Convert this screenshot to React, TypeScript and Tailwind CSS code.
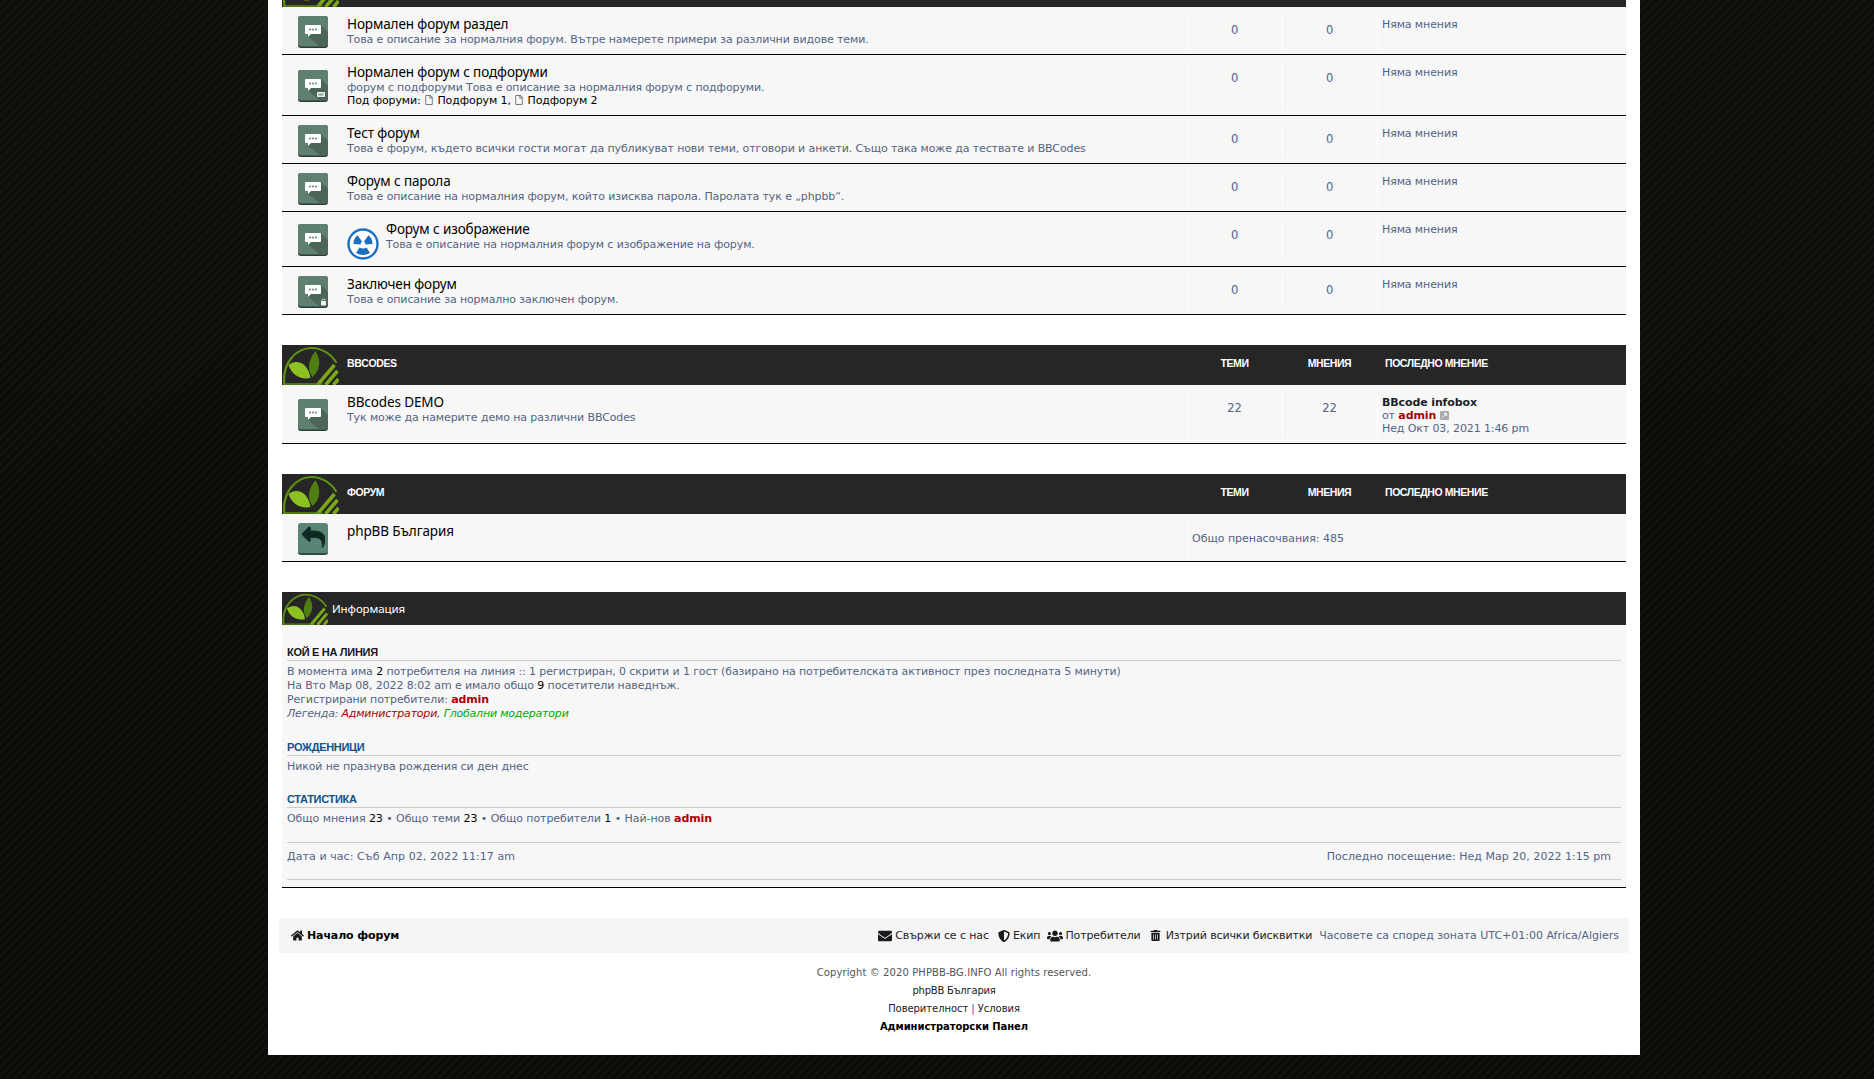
import React from 'react';
import { FaEnvelope, FaHome, FaRegFile, FaShieldAlt, FaTrashAlt, FaUsers } from 'react-icons/fa';

const titleFont = "font-['Noto_Sans',sans-serif]";

const Logo: React.FC<{ small?: boolean }> = ({ small }) => (
  <svg viewBox="0 0 56 40" className={small ? 'w-[46px] h-[33px] shrink-0' : 'w-[57px] h-[40px] shrink-0'}>
    <path d="M2 40 C-1 18 14 3 29 3 C39 3 49 9 54 18" fill="none" stroke="#5f8f12" strokeWidth="2.2" />
    <path d="M6 20 C14 13 26 18 28 33 C17 35 9 29 6 20Z" fill="#8dc021" />
    <path d="M30 32 C23 22 28 12 33 6 C38 14 39 24 30 32Z" fill="#4f7f12" />
    <path d="M35 40 L52 20 M43 40 L55 26 M51 40 L56 34" stroke="#7aa81a" strokeWidth="3.6" fill="none" />
    <path d="M2 39 H40" stroke="#5f8f12" strokeWidth="1.4" />
  </svg>
);

const ForumIcon: React.FC<{ mark?: 'sub' | 'lock' }> = ({ mark }) => (
  <svg viewBox="0 0 30 32" className="w-[30px] h-[32px] shrink-0">
    <rect x="0" y="0" width="30" height="32" rx="3" fill="#2c3b34" />
    <rect x="0" y="0" width="30" height="30.5" rx="3" fill="#5f8070" />
    <path d="M23 9 L30 16 V27.5 Q30 30.5 27 30.5 H22 L9 20 Z" fill="#4b6559" />
    <path d="M8 9 H22 Q23 9 23 10 V17 Q23 18 22 18 H13 L10 21 V18 H8 Q7 18 7 17 V10 Q7 9 8 9Z" fill="#fff" />
    <circle cx="12" cy="13.5" r="1" fill="#5f8070" />
    <circle cx="15" cy="13.5" r="1" fill="#5f8070" />
    <circle cx="18" cy="13.5" r="1" fill="#5f8070" />
    {mark === 'sub' && (
      <g>
        <rect x="19" y="22" width="8" height="5" rx="0.5" fill="#e8eeeb" />
        <rect x="20.5" y="23.5" width="5" height="2" fill="#8aa297" />
      </g>
    )}
    {mark === 'lock' && (
      <g>
        <rect x="23" y="25" width="5" height="4.5" rx="0.5" fill="#f2f2f2" />
        <rect x="24" y="23" width="3" height="3" rx="1.4" fill="none" stroke="#f2f2f2" strokeWidth="0.8" />
      </g>
    )}
  </svg>
);

const ReplyIcon = () => (
  <div className="w-[30px] h-[32px] shrink-0 rounded-[3px] bg-[#5a8474] border-b-2 border-[#2c4a40] flex items-center justify-center">
    <svg viewBox="0 0 1792 1792" className="w-[23px] h-[23px]" fill="#0f2a24" stroke="#0f2a24" strokeWidth="70">
      <path d="M1792 1120q0 166-127 451-3 7-10.5 24t-13.5 30-13 22q-12 17-28 17-15 0-23.5-10t-8.5-25q0-9 2.5-26.5t2.5-23.5q5-68 5-123 0-101-17.5-181t-48.5-138.5-80-101-105.5-69.5-133-42.5-154-21.5-175.5-6h-224v256q0 26-19 45t-45 19-45-19l-512-512q-19-19-19-45t19-45l512-512q19-19 45-19t45 19 19 45v256h224q713 0 875 403 53 134 53 333z" />
    </svg>
  </div>
);

const RadiationIcon = () => (
  <svg viewBox="0 0 32 32" className="w-[32px] h-[32px] shrink-0 float-left mt-[10px] mr-[7px]">
    <circle cx="16" cy="16" r="14.5" fill="#fff" stroke="#1c6fc0" strokeWidth="2.4" />
    <path d="M13.5 13 L9 6.8 Q5 10 4.9 15.5 L12 16 Q12.3 14.2 13.5 13Z" fill="#1c6fc0" transform="translate(1.5 0.5)" />
    <path d="M18.5 13 L23 6.8 Q27 10 27.1 15.5 L20 16 Q19.7 14.2 18.5 13Z" fill="#1c6fc0" transform="translate(-1.5 0.5)" />
    <path d="M12.5 19.5 L9 25 Q16 29 23 25 L19.5 19.5 Q16 21.5 12.5 19.5Z" fill="#1c6fc0" />
  </svg>
);

const SectionHeader: React.FC<{ title: string }> = ({ title }) => (
  <div className="h-[40px] bg-[#262626] flex items-center text-white text-[10.5px] font-['Liberation_Sans',sans-serif] font-bold tracking-[-0.42px]">
    <div className="flex-1 flex items-center min-w-0">
      <div className="self-end h-[40px]">
        <Logo />
      </div>
      <span className="ml-[8px] mb-[3px]">{title}</span>
    </div>
    <div className="w-[95px] text-center mb-[3px]">ТЕМИ</div>
    <div className="w-[95px] text-center mb-[3px]">МНЕНИЯ</div>
    <div className="w-[249px] pl-[8px] mb-[3px]">ПОСЛЕДНО МНЕНИЕ</div>
  </div>
);

interface RowProps {
  title: string;
  desc: string;
  mark?: 'sub' | 'lock';
  withImage?: boolean;
  subforums?: boolean;
  topics?: string;
  posts?: string;
  last?: React.ReactNode;
}

const Row: React.FC<RowProps> = ({ title, desc, mark, withImage, subforums, topics = '0', posts = '0', last }) => {
  const height = subforums ? 'min-h-[50px]' : withImage ? 'min-h-[44px]' : last ? 'min-h-[48px]' : 'min-h-[37px]';
  return (
    <div className="pt-[6px] pb-[4px] bg-[#f7f7f7] border-b border-black">
      <div className={`flex ${height}`}>
        <div className="flex-1 flex items-center pl-[16px] min-w-0">
          <ForumIcon mark={mark} />
          <div className="ml-[19px] self-start flex-1 min-w-0">
            {withImage && <RadiationIcon />}
            <div className={`${titleFont} text-[13.5px] leading-[14px] text-black pt-[4px]`}>{title}</div>
            <div className="text-[#536482] leading-[14px] pt-[2px]">{desc}</div>
            {subforums && (
              <div className="text-black leading-[14px] -mt-[1px]">
                Под форуми: <FaRegFile className="inline text-[10px] text-[#777] -mt-[2px]" /> Подфорум 1, <FaRegFile className="inline text-[10px] text-[#777] -mt-[2px]" /> Подфорум 2
              </div>
            )}
          </div>
        </div>
        <div className="w-[95px] border-l border-white pr-[1px] text-center text-[11.5px] text-[#536482] pt-[10px] leading-[14px]">{topics}</div>
        <div className="w-[95px] border-l border-white pr-[1px] text-center text-[11.5px] text-[#536482] pt-[10px] leading-[14px]">{posts}</div>
        <div className="w-[249px] border-l border-white pl-[4px] pt-[5px] leading-[13px] text-[#536482]">{last ?? 'Няма мнения'}</div>
      </div>
    </div>
  );
};

const Who: React.FC<{ children: React.ReactNode }> = ({ children }) => <span className="text-black">{children}</span>;
const Admin = () => <span className="font-bold text-[#aa0000]">admin</span>;

const Heading: React.FC<{ color: string; children: React.ReactNode }> = ({ color, children }) => (
  <div className={`font-['Liberation_Sans',sans-serif] font-bold text-[11px] tracking-[-0.3px] leading-[14px] border-b border-[#cccccc] pb-[1px] ${color}`}>
    {children}
  </div>
);

export default function App() {
  return (
    <div className="h-[1079px] overflow-hidden bg-[#0a0a08] bg-[linear-gradient(180deg,#1a1b1440_0px,#0a0a0800_700px),repeating-linear-gradient(135deg,#0a0a08_0px,#0a0a08_3px,#10100c_3px,#10100c_6px)] font-['DejaVu_Sans',sans-serif] text-[11px] tracking-[-0.11px]">
      <div className="ml-[268px] w-[1372px] h-[1055px] bg-white px-[14px]">
        <div className="h-[7px] bg-[#262626] overflow-hidden flex items-end">
          <div className="h-[7px] overflow-hidden flex items-end"><Logo /></div>
        </div>
        <Row title="Нормален форум раздел" desc="Това е описание за нормалния форум. Вътре намерете примери за различни видове теми." />
        <Row title="Нормален форум с подфоруми" desc="форум с подфоруми Това е описание за нормалния форум с подфоруми." mark="sub" subforums />
        <Row title="Тест форум" desc="Това е форум, където всички гости могат да публикуват нови теми, отговори и анкети. Също така може да тествате и BBCodes" />
        <Row title="Форум с парола" desc="Това е описание на нормалния форум, който изисква парола. Паролата тук е „phpbb“." />
        <Row title="Форум с изображение" desc="Това е описание на нормалния форум с изображение на форум." withImage />
        <Row title="Заключен форум" desc="Това е описание за нормално заключен форум." mark="lock" />

        <div className="mt-[30px]">
          <SectionHeader title="BBCODES" />
          <Row
            title="BBcodes DEMO"
            desc="Тук може да намерите демо на различни BBCodes"
            topics="22"
            posts="22"
            last={
              <>
                <div className="font-bold text-[#1f1f24]">BBcode infobox</div>
                <div>
                  от <Admin />{' '}
                  <svg viewBox="0 0 9 9" className="inline w-[9px] h-[9px] align-[-1px]">
                    <rect width="9" height="9" rx="1" fill="#aaaaaa" />
                    <path d="M2.5 6.5 L6 3 M4 2.5 H6.5 V5" stroke="#fff" strokeWidth="1" fill="none" />
                  </svg>
                </div>
                <div>Нед Окт 03, 2021 1:46 pm</div>
              </>
            }
          />
        </div>

        <div className="mt-[30px]">
          <SectionHeader title="ФОРУМ" />
          <div className="pt-[6px] pb-[4px] bg-[#f7f7f7] border-b border-black">
            <div className="flex min-h-[37px]">
              <div className="flex-1 flex items-center pl-[16px]">
                <ReplyIcon />
                <div className={`${titleFont} ml-[19px] self-start text-[13.5px] leading-[14px] text-black pt-[4px]`}>phpBB България</div>
              </div>
              <div className="w-[439px] border-l border-white pl-[4px] pt-[1px] flex items-center text-[#536482] tracking-[-0.03px]">Общо пренасочвания: 485</div>
            </div>
          </div>
        </div>

        <div className="mt-[30px] bg-[#f7f7f7] border-b border-black">
          <div className="h-[33px] bg-[#262626] flex items-center text-white">
            <Logo small />
            <span className={`${titleFont} text-[11.5px] ml-[4px]`}>Информация</span>
          </div>
          <div className="px-[5px] pt-[20px] pb-[7px] text-[#536482] leading-[14px]">
            <Heading color="text-[#1a1a1a]">КОЙ Е НА ЛИНИЯ</Heading>
            <div className="pt-[4px]">
              В момента има <Who>2</Who> потребителя на линия :: 1 регистриран, 0 скрити и 1 гост (базирано на потребителската активност през последната 5 минути)
              <br />
              На Вто Мар 08, 2022 8:02 am е имало общо <Who>9</Who> посетители наведнъж.
              <br />
              Регистрирани потребители: <Admin />
              <br />
              <em className="tracking-[-0.2px]">
                Легенда: <span className="text-[#aa0000]">Администратори</span>, <span className="text-[#00aa00]">Глобални модератори</span>
              </em>
            </div>
            <div className="mt-[19px]">
              <Heading color="text-[#105289]">РОЖДЕННИЦИ</Heading>
            </div>
            <div className="pt-[4px]">Никой не празнува рождения си ден днес</div>
            <div className="mt-[18px]">
              <Heading color="text-[#105289]">СТАТИСТИКА</Heading>
            </div>
            <div className="pt-[4px] tracking-[-0.07px]">
              Общо мнения <Who>23</Who> • Общо теми <Who>23</Who> • Общо потребители <Who>1</Who> • Най-нов <Admin />
            </div>
            <div className="mt-[16px] border-y border-[#cccccc] py-[7px] pr-[10px] h-[38px] flex justify-between">
              <span className="tracking-[0.08px]">Дата и час: Съб Апр 02, 2022 11:17 am</span>
              <span className="tracking-[0.02px]">Последно посещение: Нед Мар 20, 2022 1:15 pm</span>
            </div>
          </div>
        </div>

        <div className="-mx-[3px] mt-[30px] h-[35px] bg-[#f5f5f5] flex items-center pl-[12px] pr-[10px] text-[#222222]">
          <FaHome className="text-[13px] text-[#1a1a1a] mr-[3px]" />
          <span className="font-bold text-black pt-[2px]">Начало форум</span>
          <div className="ml-auto flex items-center">
            <FaEnvelope className="text-[14px] text-[#1a1a1a] mr-[3px]" />
            <span className="pt-[2px]">Свържи се с нас</span>
            <FaShieldAlt className="text-[12px] text-[#1a1a1a] ml-[9px] mr-[3px]" />
            <span className="pt-[2px]">Екип</span>
            <FaUsers className="text-[16px] text-[#1a1a1a] ml-[7px] mr-[2px]" />
            <span className="pt-[2px]">Потребители</span>
            <FaTrashAlt className="text-[11px] text-[#1a1a1a] ml-[9px] mr-[5px]" />
            <span className="pt-[2px]">Изтрий всички бисквитки</span>
            <span className="ml-[7px] pt-[2px] text-[#536482] tracking-[-0.01px]">Часовете са според зоната UTC+01:00 Africa/Algiers</span>
          </div>
        </div>

        <div className="mt-[11px] text-center text-[10px] leading-[18px] text-[#555555]">
          <div className="tracking-[0.09px]">Copyright © 2020 PHPBB-BG.INFO All rights reserved.</div>
          <div className="text-[#222222] tracking-[-0.25px]">phpBB България</div>
          <div className="text-[#222222] tracking-[-0.06px]">
            Поверителност <span className="text-[#105289]">|</span> Условия
          </div>
          <div className="font-bold text-black tracking-[-0.07px]">Администраторски Панел</div>
        </div>
      </div>
    </div>
  );
}
